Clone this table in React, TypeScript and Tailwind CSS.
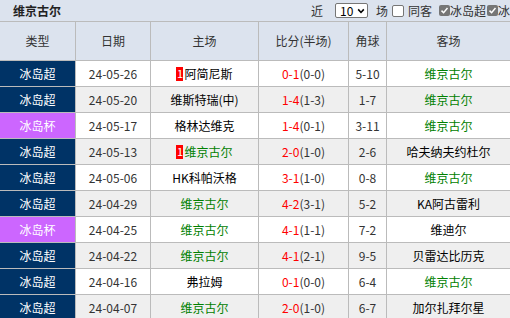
import React from 'react';

type Match = {
  type: '冰岛超' | '冰岛杯';
  date: string;
  home: string;
  homeBadge?: boolean;
  score: string;
  half: string;
  corner: string;
  away: string;
};

const TEAM = '维京古尔';

const MATCHES: Match[] = [
  { type: '冰岛超', date: '24-05-26', home: '阿简尼斯', homeBadge: true, score: '0-1', half: '(0-0)', corner: '5-10', away: TEAM },
  { type: '冰岛超', date: '24-05-20', home: '维斯特瑞(中)', score: '1-4', half: '(1-3)', corner: '1-7', away: TEAM },
  { type: '冰岛杯', date: '24-05-17', home: '格林达维克', score: '1-4', half: '(0-1)', corner: '3-11', away: TEAM },
  { type: '冰岛超', date: '24-05-13', home: TEAM, homeBadge: true, score: '2-0', half: '(1-0)', corner: '2-6', away: '哈夫纳夫约杜尔' },
  { type: '冰岛超', date: '24-05-06', home: 'HK科帕沃格', score: '3-1', half: '(1-0)', corner: '0-8', away: TEAM },
  { type: '冰岛超', date: '24-04-29', home: TEAM, score: '4-2', half: '(3-1)', corner: '5-2', away: 'KA阿古雷利' },
  { type: '冰岛杯', date: '24-04-25', home: TEAM, score: '4-1', half: '(1-1)', corner: '7-2', away: '维迪尔' },
  { type: '冰岛超', date: '24-04-22', home: TEAM, score: '4-1', half: '(2-1)', corner: '9-5', away: '贝雷达比历克' },
  { type: '冰岛超', date: '24-04-16', home: '弗拉姆', score: '0-1', half: '(0-0)', corner: '6-4', away: TEAM },
  { type: '冰岛超', date: '24-04-07', home: TEAM, score: '2-0', half: '(1-0)', corner: '6-7', away: '加尔扎拜尔星' },
];

const COLS = 'grid grid-cols-[76px_75px_108px_90px_38px_123px]';

const Team = ({ name }: { name: string }) => (
  <span className={name === TEAM ? 'text-[#008000]' : 'text-black'}>{name}</span>
);

const Box = ({ checked }: { checked?: boolean }) =>
  checked ? (
    <span className="flex h-[11px] w-[11px] shrink-0 items-center justify-center rounded-[2px] bg-[#767676]">
      <svg viewBox="0 0 12 12" className="h-[9px] w-[9px]">
        <path d="M2 6.2 L4.8 9 L10 2.8" fill="none" stroke="white" strokeWidth="2" />
      </svg>
    </span>
  ) : (
    <span className="block h-[12px] w-[12px] shrink-0 rounded-[2px] border border-[#767676] bg-white" />
  );

export default function App() {
  return (
    <div
      className="w-[510px] h-[318px] overflow-hidden bg-white text-[12px] text-[#333]"
      style={{ fontFamily: '"Noto Sans CJK SC", "Noto Sans", sans-serif' }}
    >
      {/* title bar */}
      <div className="flex h-[22px] items-center overflow-hidden whitespace-nowrap border-b border-[#bbbbbb] bg-[#dce3ee]">
        <div className="w-[311px] shrink-0 pl-[13px] font-bold text-[#222]">维京古尔</div>
        <div className="flex shrink-0 items-center text-[#333]">
          <span>近</span>
          <span className="ml-[12px] mr-[8px] flex h-[15px] w-[33px] items-center justify-between rounded-[2px] border border-[#767676] bg-white pl-[4px] pr-[2px] leading-none text-black">
            10
            <svg viewBox="0 0 10 10" className="h-[8px] w-[8px]">
              <path d="M1.5 3 L5 6.8 L8.5 3" fill="none" stroke="black" strokeWidth="2" />
            </svg>
          </span>
          <span>场</span>
          <span className="ml-[4px] mr-[4px] flex"><Box /></span>
          <span>同客</span>
          <span className="ml-[7px] flex"><Box checked /></span>
          <span>冰岛超</span>
          <span className="ml-px flex"><Box checked /></span>
          <span>冰岛杯</span>
        </div>
      </div>

      {/* header */}
      <div className={`${COLS} h-[39px] border-b border-[#bbbbbb] bg-[#dce3ee] text-[#333]`}>
        {['类型', '日期', '主场', '比分(半场)', '角球', '客场'].map((h, i) => (
          <div
            key={h}
            className={`flex items-center justify-center ${i < 5 ? 'border-r border-[#bbbbbb]' : ''}`}
          >
            {h}
          </div>
        ))}
      </div>

      {/* rows */}
      {MATCHES.map((m, r) => (
        <div
          key={m.date}
          className={`${COLS} h-[26px] border-b border-[#bbbbbb] ${r % 2 ? 'bg-[#efefef]' : 'bg-white'}`}
        >
          <div
            className={`flex items-center justify-center border-r border-[#bbbbbb] text-white ${
              m.type === '冰岛杯' ? 'bg-[#cc66ff]' : 'bg-[#003366]'
            }`}
          >
            {m.type}
          </div>
          <div className="flex items-center justify-center border-r border-[#bbbbbb]">{m.date}</div>
          <div className="flex items-center justify-center border-r border-[#bbbbbb]">
            {m.homeBadge && (
              <span className="mr-px flex h-[14px] w-[7px] items-center justify-center bg-[#ff0000] text-[11px] leading-none text-white">
                1
              </span>
            )}
            <Team name={m.home} />
          </div>
          <div className="flex items-center justify-center border-r border-[#bbbbbb]">
            <span className="text-[#ff0000]">{m.score}</span>
            <span>{m.half}</span>
          </div>
          <div className="flex items-center justify-center border-r border-[#bbbbbb]">{m.corner}</div>
          <div className="flex items-center justify-center">
            <Team name={m.away} />
          </div>
        </div>
      ))}
    </div>
  );
}
